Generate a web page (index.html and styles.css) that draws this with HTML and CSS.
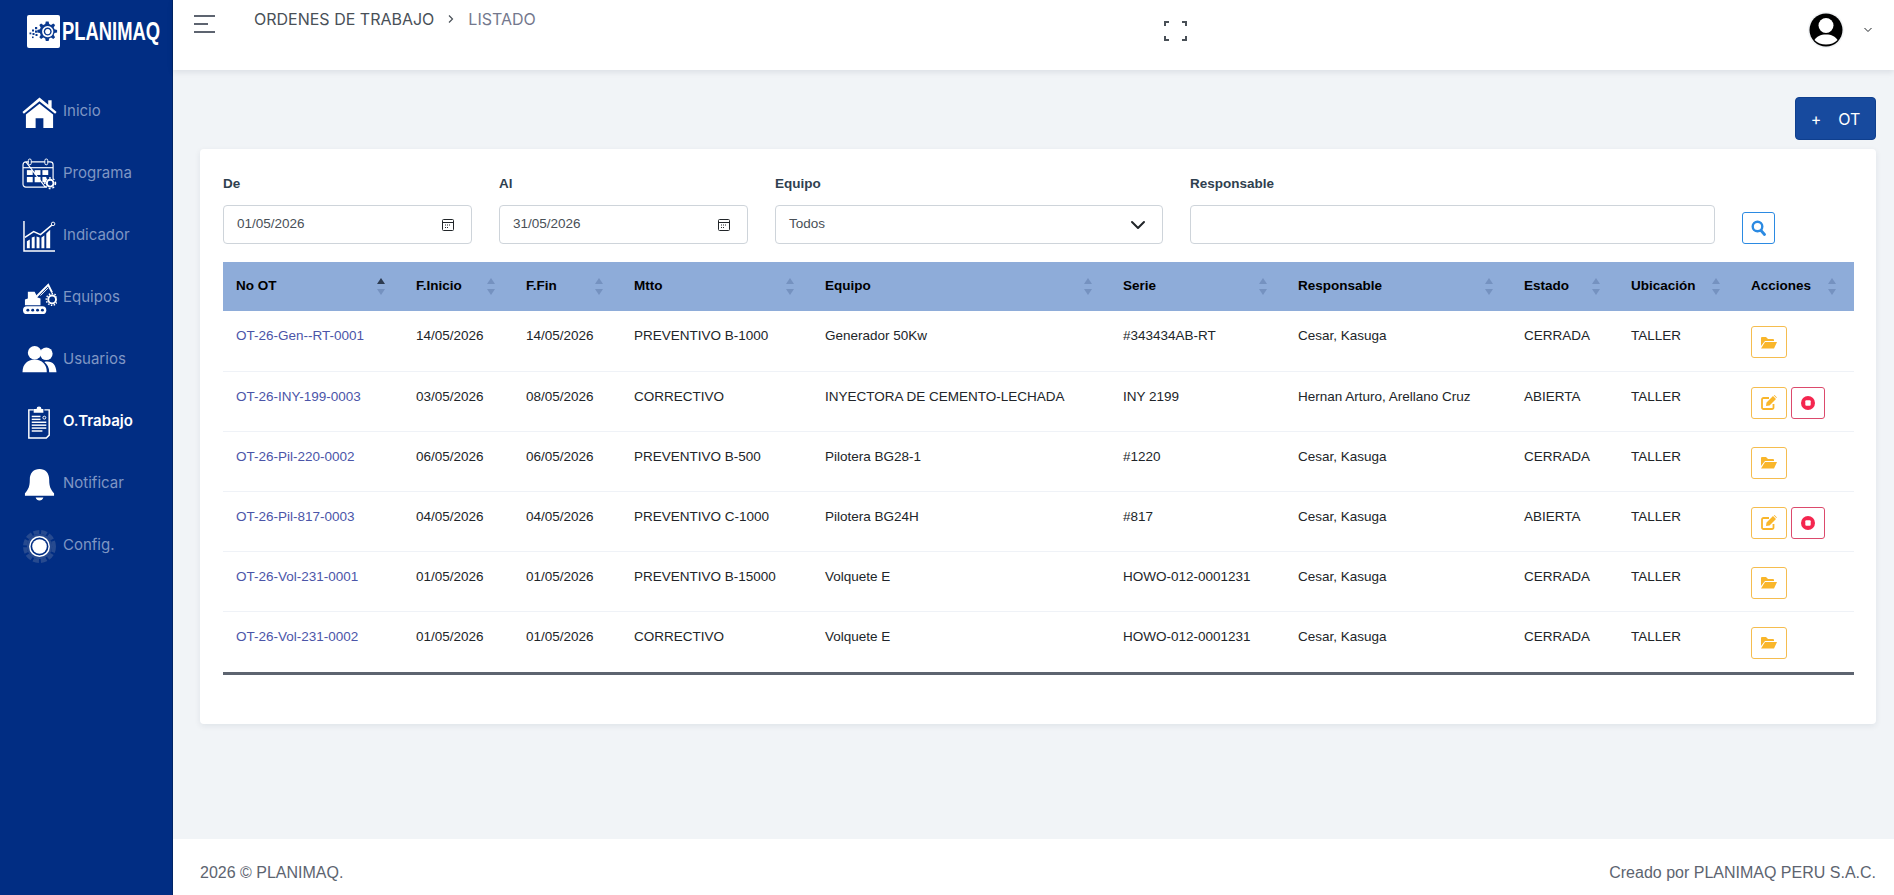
FILE: index.html
```html
<!DOCTYPE html>
<html lang="es">
<head>
<meta charset="utf-8">
<title>Ordenes de trabajo</title>
<link rel="stylesheet" href="styles.css">
</head>
<body>
<aside class="sidebar">
  <div class="brand">
    <span class="brand-mark">
      <svg viewBox="0 0 33 33" width="33" height="33">
        <rect width="33" height="33" rx="2" fill="#fff"/>
        <g fill="#0b3a8f">
          <path fill-rule="evenodd" d="M20 6.500l1.600 0 .6 2.600 1.800.8 2.300-1.400 1.800 1.600-1.400 2.300.8 1.900 2.600.6v2.600l-2.600.6-.8 1.900 1.400 2.300-1.800 1.700-2.300-1.400-1.800.8-.6 2.600h-2.800l-.6-2.600-1.900-.8-2.200 1.400-1.800-1.700 1.400-2.300-.8-1.900-2.600-.6v-2.600l2.600-.6.8-1.900-1.400-2.300 1.800-1.600 2.200 1.400 1.900-.8.6-2.600zM20.700 11a5.600 5.600 0 1 0 .01 0z"/>
          <path fill-rule="evenodd" d="M20.700 12.600a4 4 0 1 1-.01 0zm0 1.400a2.600 2.600 0 1 0 .01 0z"/>
          <rect x="8" y="12" width="2.200" height="2.200"/><rect x="5" y="14.500" width="2" height="2"/><rect x="8" y="15.500" width="2.200" height="2.200"/><rect x="2.500" y="17.500" width="1.800" height="1.800"/><rect x="5.500" y="18" width="2" height="2"/><rect x="8.500" y="19" width="2" height="2"/><rect x="5" y="21.500" width="1.600" height="1.600"/>
        </g>
      </svg>
    </span>
    <span class="brand-name">PLANIMAQ</span>
  </div>
  <nav class="menu">
    <a class="menu-item">
      <svg class="menu-icon" viewBox="0 0 36 34"><path fill="#fff" d="M18 1.500L27 9V4.500h3.500v7.600L35.600 16.500l-1.500 1.900L18 5.500 1.900 18.400.4 16.500z"/><path fill="#fff" d="M18 8L32 19v14H22V23h-8v10H4V19z"/></svg>
      <span>Inicio</span>
    </a>
    <a class="menu-item">
      <svg class="menu-icon" viewBox="0 0 36 34"><path fill="none" stroke="#fff" stroke-width="1.200" d="M4 4h25a3 3 0 0 1 3 3v14M24 30H4a3 3 0 0 1-3-3V7a3 3 0 0 1 3-3z"/><path fill="none" stroke="#fff" stroke-width="1.200" d="M1 10h31"/><rect x="6.500" y="1" width="3" height="6" rx="1.500" fill="#012d83" stroke="#fff"/><rect x="23.500" y="1" width="3" height="6" rx="1.500" fill="#012d83" stroke="#fff"/><g fill="#fff"><rect x="5" y="12.500" width="6" height="5"/><rect x="13" y="12.500" width="6" height="5"/><rect x="21" y="12.500" width="6" height="5"/><rect x="5" y="19.500" width="6" height="5.500"/><rect x="13" y="19.500" width="6" height="5.500"/><rect x="21" y="19.500" width="4" height="5.500"/></g><circle cx="29" cy="26" r="3.500" fill="none" stroke="#fff" stroke-width="2"/><circle cx="29" cy="26" r="5.500" fill="none" stroke="#fff" stroke-width="1.500" stroke-dasharray="2 2"/></svg>
      <span>Programa</span>
    </a>
    <a class="menu-item">
      <svg class="menu-icon" viewBox="0 0 36 34"><path fill="none" stroke="#fff" stroke-width="1.500" d="M2 1v31h32"/><g fill="#fff"><path d="M5 29v-7l3-2v9z"/><path d="M10 29V18l3-1v12z"/><path d="M15 29V17l3 1v11z"/><path d="M20 29V18l3-2v13z"/><path d="M25 29V14l4-4v19z"/></g><path fill="none" stroke="#fff" stroke-width="1.500" d="M3 18l9-6 7 3 12-10"/><circle cx="32" cy="4" r="1.800" fill="#012d83" stroke="#fff"/></svg>
      <span>Indicador</span>
    </a>
    <a class="menu-item">
      <svg class="menu-icon" viewBox="0 0 36 34"><path fill="#fff" d="M6 10h7l3 6 3 1v7H3v-6l3-1z"/><path fill="none" stroke="#fff" stroke-width="2" d="M15 15L27 3l4 8"/><path fill="none" stroke="#fff" stroke-width="1" d="M19 14L27 6"/><circle cx="31" cy="18" r="4" fill="none" stroke="#fff" stroke-width="2"/><circle cx="31" cy="18" r="6" fill="none" stroke="#fff" stroke-width="1.500" stroke-dasharray="1.500 1.500"/><rect x="1" y="25" width="24" height="8" rx="4" fill="#fff"/><g fill="#012d83"><circle cx="6" cy="29" r="1.500"/><circle cx="11" cy="29" r="1.500"/><circle cx="16" cy="29" r="1.500"/><circle cx="21" cy="29" r="1.500"/></g></svg>
      <span>Equipos</span>
    </a>
    <a class="menu-item">
      <svg class="menu-icon" viewBox="0 0 36 34"><circle cx="25" cy="10" r="6.500" fill="#fff"/><path fill="#fff" d="M26 18c6 0 9 4 9.500 11H28c0-5-2-8-5-10.500 1-.4 2-.5 3-.5z"/><circle cx="13" cy="9" r="7" fill="#fff"/><path fill="#fff" d="M.5 29c0-8 5-13 12.500-13s12.500 5 12.500 13z"/></svg>
      <span>Usuarios</span>
    </a>
    <a class="menu-item menu-item-active">
      <svg class="menu-icon" viewBox="0 0 36 34"><path fill="none" stroke="#fff" stroke-width="1.500" d="M12 4H7v29h18l3-3V4h-5"/><path fill="#fff" d="M15 3a2.500 2.500 0 0 1 5 0h2v4H12V3z"/><g fill="#fff"><rect x="10" y="10" width="9" height="1.500"/><rect x="10" y="13" width="9" height="1.500"/><rect x="10" y="16" width="15" height="1.500"/><rect x="10" y="19" width="15" height="1.500"/><rect x="10" y="22" width="15" height="1.500"/><rect x="10" y="25" width="11" height="1.500"/></g><circle cx="23" cy="12" r="1.500" fill="none" stroke="#fff"/></svg>
      <span>O.Trabajo</span>
    </a>
    <a class="menu-item">
      <svg class="menu-icon" viewBox="0 0 36 34"><path fill="#fff" d="M18 1c6 0 10 4 10 11 0 7 1.500 10 5 14v2.500H3V26c3.500-4 5-7 5-14C8 5 12 1 18 1z"/><path fill="#fff" d="M14 30.500h8c-.6 2-2 3-4 3s-3.400-1-4-3z"/></svg>
      <span>Notificar</span>
    </a>
    <a class="menu-item">
      <svg class="menu-icon" viewBox="0 0 36 34"><circle cx="18" cy="17" r="15" fill="none" stroke="#274a8f" stroke-width="4" stroke-dasharray="6 2"/><circle cx="18" cy="17" r="13" fill="#274a8f"/><circle cx="18" cy="17" r="10" fill="#012d83" stroke="#fff" stroke-width="1.500"/><circle cx="18" cy="17" r="7.500" fill="#fff"/></svg>
      <span>Config.</span>
    </a>
  </nav>
</aside>

<div class="main">
  <header class="topbar">
    <button class="hamburger" aria-label="Menu">
      <svg viewBox="0 0 22 19" width="22" height="19"><g fill="#5d6470"><rect x="0" y="0" width="21" height="2"/><rect x="0" y="8" width="14" height="2"/><rect x="0" y="16" width="21" height="2"/></g></svg>
    </button>
    <div class="breadcrumb">
      <span class="crumb">ORDENES DE TRABAJO</span>
      <svg class="crumb-sep" viewBox="0 0 8 10" width="8" height="10"><path fill="none" stroke="#495057" stroke-width="1.200" d="M2 1.500L5.500 5 2 8.500"/></svg>
      <span class="crumb crumb-current">LISTADO</span>
    </div>
    <svg class="fullscreen" viewBox="0 0 23 20" width="23" height="20"><path fill="none" stroke="#495057" stroke-width="2" d="M1 5V1h4M18 1h4v4M1 15v4h4M22 15v4h-4"/></svg>
    <div class="user">
      <span class="avatar">
        <svg viewBox="0 0 36 36" width="36" height="36"><circle cx="18" cy="18" r="18" fill="#f1f3f5"/><circle cx="18" cy="18" r="16.500" fill="#000"/><circle cx="18" cy="13.500" r="7.500" fill="#fff"/><path fill="#fff" d="M6.500 28c2-3.500 6-5.500 11.500-5.500s9.500 2 11.500 5.500c-3 3-7 4.500-11.500 4.500S9.500 31 6.500 28z"/></svg>
      </span>
      <svg class="user-caret" viewBox="0 0 10 6" width="10" height="6"><path fill="none" stroke="#212529" d="M1.500 1L5 4.500 8.500 1"/></svg>
    </div>
  </header>

  <main class="content">
    <div class="actions-bar">
      <button class="btn-new"><span>+</span><span>OT</span></button>
    </div>
    <section class="card">
      <div class="filters">
        <div class="field">
          <label class="field-label">De</label>
          <div class="input input-date"><span>01/05/2026</span>
            <svg viewBox="0 0 14 14" width="14" height="14"><path fill="none" stroke="#212529" d="M2.500 1.500h9a1 1 0 0 1 1 1v9a1 1 0 0 1-1 1h-9a1 1 0 0 1-1-1v-9a1 1 0 0 1 1-1zM1.500 4.500h11"/><path stroke="#212529" stroke-dasharray="1 1" d="M4 7h6M4 9.500h4"/></svg>
          </div>
        </div>
        <div class="field">
          <label class="field-label">Al</label>
          <div class="input input-date"><span>31/05/2026</span>
            <svg viewBox="0 0 14 14" width="14" height="14"><path fill="none" stroke="#212529" d="M2.500 1.500h9a1 1 0 0 1 1 1v9a1 1 0 0 1-1 1h-9a1 1 0 0 1-1-1v-9a1 1 0 0 1 1-1zM1.500 4.500h11"/><path stroke="#212529" stroke-dasharray="1 1" d="M4 7h6M4 9.500h4"/></svg>
          </div>
        </div>
        <div class="field">
          <label class="field-label">Equipo</label>
          <div class="input input-select"><span>Todos</span>
            <svg viewBox="0 0 16 16" width="16" height="16"><path fill="none" stroke="#212529" stroke-width="2" stroke-linecap="round" stroke-linejoin="round" d="M2 5l6 6 6-6"/></svg>
          </div>
        </div>
        <div class="field">
          <label class="field-label">Responsable</label>
          <div class="input"></div>
        </div>
        <button class="btn-search" aria-label="Buscar">
          <svg viewBox="0 0 15 16" width="15" height="16"><circle cx="6.500" cy="6.500" r="4.800" fill="none" stroke="#2b8ae2" stroke-width="2.400"/><path stroke="#2b8ae2" stroke-width="2.800" stroke-linecap="round" d="M10 10.500l3.500 4"/></svg>
        </button>
      </div>

      <table class="grid">
        <colgroup>
          <col class="c-ot"><col class="c-ini"><col class="c-fin"><col class="c-mtto"><col class="c-eq"><col class="c-serie"><col class="c-resp"><col class="c-est"><col class="c-ubi"><col class="c-acc">
        </colgroup>
        <thead>
          <tr>
            <th class="sorted">No OT</th>
            <th>F.Inicio</th>
            <th>F.Fin</th>
            <th>Mtto</th>
            <th>Equipo</th>
            <th>Serie</th>
            <th>Responsable</th>
            <th>Estado</th>
            <th>Ubicación</th>
            <th>Acciones</th>
          </tr>
        </thead>
        <tbody>
          <tr>
            <td><a class="ot-link">OT-26-Gen--RT-0001</a></td><td>14/05/2026</td><td>14/05/2026</td><td>PREVENTIVO B-1000</td><td>Generador 50Kw</td><td>#343434AB-RT</td><td>Cesar, Kasuga</td><td>CERRADA</td><td>TALLER</td>
            <td class="cell-actions"><button class="btn-icon btn-warn" aria-label="Ver"><svg viewBox="0 0 16 13" width="16" height="13"><path fill="#f9b62b" d="M0 2a1 1 0 0 1 1-1h4l2 2h5a1 1 0 0 1 1 1v1H4L0 10z"/><path fill="#f9b62b" d="M4 6h12l-3 6.500H0z"/></svg></button></td>
          </tr>
          <tr>
            <td><a class="ot-link">OT-26-INY-199-0003</a></td><td>03/05/2026</td><td>08/05/2026</td><td>CORRECTIVO</td><td>INYECTORA DE CEMENTO-LECHADA</td><td>INY 2199</td><td>Hernan Arturo, Arellano Cruz</td><td>ABIERTA</td><td>TALLER</td>
            <td class="cell-actions"><button class="btn-icon btn-warn" aria-label="Editar"><svg viewBox="0 0 16 15" width="16" height="15"><path fill="none" stroke="#f9b62b" stroke-width="1.800" d="M12.500 9v3.500a1.500 1.500 0 0 1-1.500 1.500H2.500A1.500 1.500 0 0 1 1 12.500V4.500A1.500 1.500 0 0 1 2.500 3H8"/><path fill="#f9b62b" d="M5.500 7.500L12 1l3 3-6.500 6.500-3.500.5zM12.800.4l.7-.4 2.400 2.400-.5.7z"/></svg></button><button class="btn-icon btn-stop" aria-label="Detener"><svg viewBox="0 0 14 14" width="14" height="14"><circle cx="7" cy="7" r="7" fill="#f4264f"/><rect x="4.300" y="4.300" width="5.400" height="5.400" rx="1" fill="#fff"/></svg></button></td>
          </tr>
          <tr>
            <td><a class="ot-link">OT-26-Pil-220-0002</a></td><td>06/05/2026</td><td>06/05/2026</td><td>PREVENTIVO B-500</td><td>Pilotera BG28-1</td><td>#1220</td><td>Cesar, Kasuga</td><td>CERRADA</td><td>TALLER</td>
            <td class="cell-actions"><button class="btn-icon btn-warn" aria-label="Ver"><svg viewBox="0 0 16 13" width="16" height="13"><path fill="#f9b62b" d="M0 2a1 1 0 0 1 1-1h4l2 2h5a1 1 0 0 1 1 1v1H4L0 10z"/><path fill="#f9b62b" d="M4 6h12l-3 6.500H0z"/></svg></button></td>
          </tr>
          <tr>
            <td><a class="ot-link">OT-26-Pil-817-0003</a></td><td>04/05/2026</td><td>04/05/2026</td><td>PREVENTIVO C-1000</td><td>Pilotera BG24H</td><td>#817</td><td>Cesar, Kasuga</td><td>ABIERTA</td><td>TALLER</td>
            <td class="cell-actions"><button class="btn-icon btn-warn" aria-label="Editar"><svg viewBox="0 0 16 15" width="16" height="15"><path fill="none" stroke="#f9b62b" stroke-width="1.800" d="M12.500 9v3.500a1.500 1.500 0 0 1-1.500 1.500H2.500A1.500 1.500 0 0 1 1 12.500V4.500A1.500 1.500 0 0 1 2.500 3H8"/><path fill="#f9b62b" d="M5.500 7.500L12 1l3 3-6.500 6.500-3.500.5zM12.800.4l.7-.4 2.400 2.400-.5.7z"/></svg></button><button class="btn-icon btn-stop" aria-label="Detener"><svg viewBox="0 0 14 14" width="14" height="14"><circle cx="7" cy="7" r="7" fill="#f4264f"/><rect x="4.300" y="4.300" width="5.400" height="5.400" rx="1" fill="#fff"/></svg></button></td>
          </tr>
          <tr>
            <td><a class="ot-link">OT-26-Vol-231-0001</a></td><td>01/05/2026</td><td>01/05/2026</td><td>PREVENTIVO B-15000</td><td>Volquete E</td><td>HOWO-012-0001231</td><td>Cesar, Kasuga</td><td>CERRADA</td><td>TALLER</td>
            <td class="cell-actions"><button class="btn-icon btn-warn" aria-label="Ver"><svg viewBox="0 0 16 13" width="16" height="13"><path fill="#f9b62b" d="M0 2a1 1 0 0 1 1-1h4l2 2h5a1 1 0 0 1 1 1v1H4L0 10z"/><path fill="#f9b62b" d="M4 6h12l-3 6.500H0z"/></svg></button></td>
          </tr>
          <tr>
            <td><a class="ot-link">OT-26-Vol-231-0002</a></td><td>01/05/2026</td><td>01/05/2026</td><td>CORRECTIVO</td><td>Volquete E</td><td>HOWO-012-0001231</td><td>Cesar, Kasuga</td><td>CERRADA</td><td>TALLER</td>
            <td class="cell-actions"><button class="btn-icon btn-warn" aria-label="Ver"><svg viewBox="0 0 16 13" width="16" height="13"><path fill="#f9b62b" d="M0 2a1 1 0 0 1 1-1h4l2 2h5a1 1 0 0 1 1 1v1H4L0 10z"/><path fill="#f9b62b" d="M4 6h12l-3 6.500H0z"/></svg></button></td>
          </tr>
        </tbody>
      </table>
    </section>
  </main>

  <footer class="footer">
    <span>2026 © PLANIMAQ.</span>
    <span>Creado por PLANIMAQ PERU S.A.C.</span>
  </footer>
</div>
</body>
</html>
```

FILE: styles.css
```css
* { box-sizing: border-box; }
html, body { margin: 0; height: 100%; }
body {
  display: flex;
  height: 895px;
  overflow: hidden;
  background: #f1f4f7;
  color: #212529;
  font: 13.5px/19px "Liberation Sans", Arial, sans-serif;
}

.sidebar {
  width: 173px;
  flex: none;
  background: #012d83;
  border-right: 1px solid #012566;
}
.brand {
  display: flex;
  align-items: center;
  gap: 2px;
  height: 63px;
  padding-left: 27px;
}
.brand-mark { display: block; width: 33px; height: 33px; }
.brand-mark svg { display: block; }
.brand-name {
  display: block;
  width: 98px;
  color: #fff;
  font: 700 25px/33px "Liberation Sans", sans-serif;
  white-space: nowrap;
  transform: scaleX(.735);
  transform-origin: left center;
}
.menu { padding-top: 18px; }
.menu-item {
  display: flex;
  align-items: center;
  gap: 6px;
  height: 62px;
  padding-left: 22px;
  color: #7f96c4;
  font: 15px/20px Inter, "Liberation Sans", sans-serif;
}
.menu-item span { position: relative; top: -1px; }
.menu-item-active { color: #fff; font-weight: 600; }
.menu-icon { width: 35px; height: 33px; flex: none; }

.main { flex: 1; min-width: 0; display: flex; flex-direction: column; }

.topbar {
  position: relative;
  display: flex;
  align-items: flex-start;
  height: 70px;
  flex: none;
  background: #fff;
  box-shadow: 0 2px 6px rgba(15, 34, 58, .10);
}
.hamburger {
  margin: 15px 0 0 21px;
  padding: 0;
  border: 0;
  background: none;
  line-height: 0;
}
.breadcrumb {
  display: flex;
  align-items: center;
  gap: 13px;
  margin: 9px 0 0 38px;
  font: 16px/20px Inter, "Liberation Sans", sans-serif;
  color: #495057;
}
.crumb-current { color: #74788d; }
.fullscreen { position: absolute; left: 991px; top: 21px; }
.user {
  margin-left: auto;
  display: flex;
  align-items: center;
  gap: 19px;
  padding: 12px 21px 0 0;
}
.avatar { display: block; width: 36px; height: 36px; }
.avatar svg { display: block; }

.content { flex: 1; padding: 27px 18px 0 27px; }
.actions-bar { display: flex; justify-content: flex-end; margin-bottom: 9px; }
.btn-new {
  display: flex;
  justify-content: center;
  gap: 17px;
  width: 81px;
  height: 43px;
  padding: 0;
  align-items: center;
  border: 1px solid #0f3f8e;
  border-radius: 4px;
  background: #174a9e;
  color: #fff;
  font: 16px/20px Inter, "Liberation Sans", sans-serif;
}

.card {
  height: 575px;
  padding: 25px 22px 0 23px;
  background: #fff;
  border-radius: 4px;
  box-shadow: 0 2px 6px rgba(15, 34, 58, .08);
}
.filters {
  display: grid;
  grid-template-columns: 249px 249px 388px 525px 33px;
  column-gap: 27px;
  height: 70px;
  margin-bottom: 18px;
}
.field-label {
  display: block;
  height: 20px;
  margin-bottom: 11px;
  color: #2f3f4f;
  font: 700 13.5px/20px "Liberation Sans", sans-serif;
}
.input {
  display: flex;
  align-items: center;
  justify-content: space-between;
  height: 39px;
  padding: 0 14px 0 13px;
  border: 1px solid #ced4da;
  border-radius: 4px;
  background: #fff;
  color: #495057;
  font: 13.5px/19px "Liberation Sans", sans-serif;
}
.input span { position: relative; top: -1px; }
.input-date svg { margin-right: 2px; }
.input-select svg { margin-right: 2px; }
.btn-search {
  align-self: end;
  height: 32px;
  width: 33px;
  padding: 0;
  border: 1px solid #2b8ae2;
  border-radius: 3px;
  background: #fff;
  line-height: 0;
}

.grid {
  width: 1631px;
  table-layout: fixed;
  border-collapse: collapse;
  border-bottom: 3px solid #5d6470;
  color: #212529;
  font: 13.5px/19px "Liberation Sans", Arial, sans-serif;
}
.c-ot { width: 180px; }
.c-ini { width: 110px; }
.c-fin { width: 108px; }
.c-mtto { width: 191px; }
.c-eq { width: 298px; }
.c-serie { width: 175px; }
.c-resp { width: 226px; }
.c-est { width: 107px; }
.c-ubi { width: 120px; }
.c-acc { width: 116px; }

.grid th {
  position: relative;
  height: 49px;
  padding: 0 13px 2px;
  background: #8eacd9;
  color: #000;
  font: 700 13.5px/19px "Liberation Sans", sans-serif;
  text-align: left;
}
.grid th::before, .grid th::after {
  content: "";
  position: absolute;
  right: 18px;
  border-left: 4px solid transparent;
  border-right: 4px solid transparent;
}
.grid th::before { top: 16px; border-bottom: 6px solid #7592c0; }
.grid th::after { top: 27px; border-top: 6px solid #7592c0; }
.grid th.sorted::before { border-bottom-color: #2d3b50; }

.grid td {
  height: 60px;
  padding: 15px 13px 0;
  vertical-align: top;
  border-bottom: 1px solid #eff2f7;
}
.grid tbody tr:last-child td { height: 62px; border-bottom: 0; }
.ot-link { color: #4b55a8; }
.cell-actions { padding-top: 15px !important; padding-left: 13px !important; padding-right: 0 !important; white-space: nowrap; }

.btn-icon {
  display: inline-flex;
  align-items: center;
  justify-content: center;
  height: 32px;
  padding: 0;
  border-radius: 3px;
  background: #fff;
  vertical-align: top;
}
.btn-warn { width: 36px; border: 1px solid #f5bd4f; }
.btn-stop { width: 34px; margin-left: 4px; border: 1px solid #dc4a6c; }

.footer {
  display: flex;
  justify-content: space-between;
  align-items: center;
  height: 56px;
  flex: none;
  padding: 11px 18px 0 27px;
  background: #fff;
  color: #5d6470;
  font: 16px/20px "Liberation Sans", sans-serif;
}
```
